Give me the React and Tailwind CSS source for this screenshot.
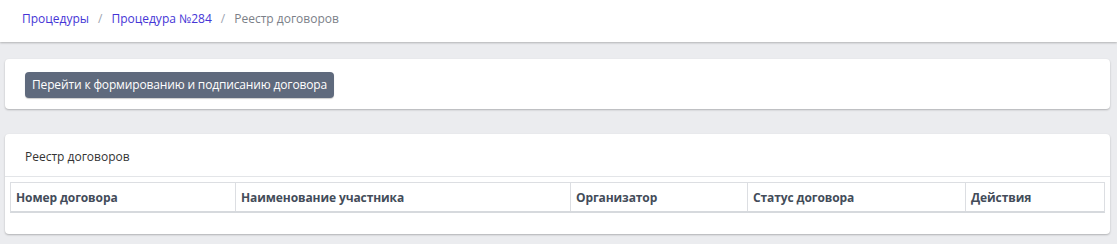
export default function App() {
  const cols = [
    { label: "Номер договора", w: "w-[225px]" },
    { label: "Наименование участника", w: "w-[335px]" },
    { label: "Организатор", w: "w-[177px]" },
    { label: "Статус договора", w: "w-[218px]" },
    { label: "Действия", w: "" },
  ];
  return (
    <div className="min-h-[244px] bg-[#ebecef] font-['Open_Sans',sans-serif] text-[12px]">
      <div className="h-[42px] bg-white shadow-[0_1px_2px_rgba(0,0,0,0.25)] flex items-center pb-[5px] pl-[22px] gap-[9px] text-[12px]">
        <span className="text-[#4535d6]">Процедуры</span>
        <span className="text-[#9ca3af]">/</span>
        <span className="text-[#4535d6]">Процедура №284</span>
        <span className="text-[#9ca3af]">/</span>
        <span className="text-[#7b8088]">Реестр договоров</span>
      </div>
      <div className="px-[5px] pt-[17px] pr-[7px]">
        <div className="bg-white rounded-[4px] shadow-[0_1px_2px_rgba(0,0,0,0.25)] h-[50px] flex items-center pl-[20px] pt-[2px]">
          <button className="h-[26px] px-[7px] rounded-[4px] bg-[#5f6a7d] text-white text-[12px] tracking-[-0.15px] leading-none shadow-[0_1px_1px_rgba(0,0,0,0.2)]">
            Перейти к формированию и подписанию договора
          </button>
        </div>
        <div className="mt-[25px] bg-white rounded-[4px] shadow-[0_1px_2px_rgba(0,0,0,0.25)] pb-[21px]">
          <div className="h-[43px] flex items-center pt-[4px] pl-[20px] text-[#333] border-b border-[#e3e5e8]">
            Реестр договоров
          </div>
          <div className="px-[5px] pt-[5px]">
            <div className="flex border border-[#dcdee2] border-b-[2px] border-b-[#d6d9dd]">
              {cols.map((c, i) => (
                <div
                  key={i}
                  className={`${c.w} ${i === cols.length - 1 ? "flex-1" : "border-r border-[#dcdee2]"} h-[28px] flex items-center pt-[2px] pl-[5px] font-bold text-[#434c59] tracking-[-0.1px]`}
                >
                  {c.label}
                </div>
              ))}
            </div>
          </div>
        </div>
      </div>
    </div>
  );
}
